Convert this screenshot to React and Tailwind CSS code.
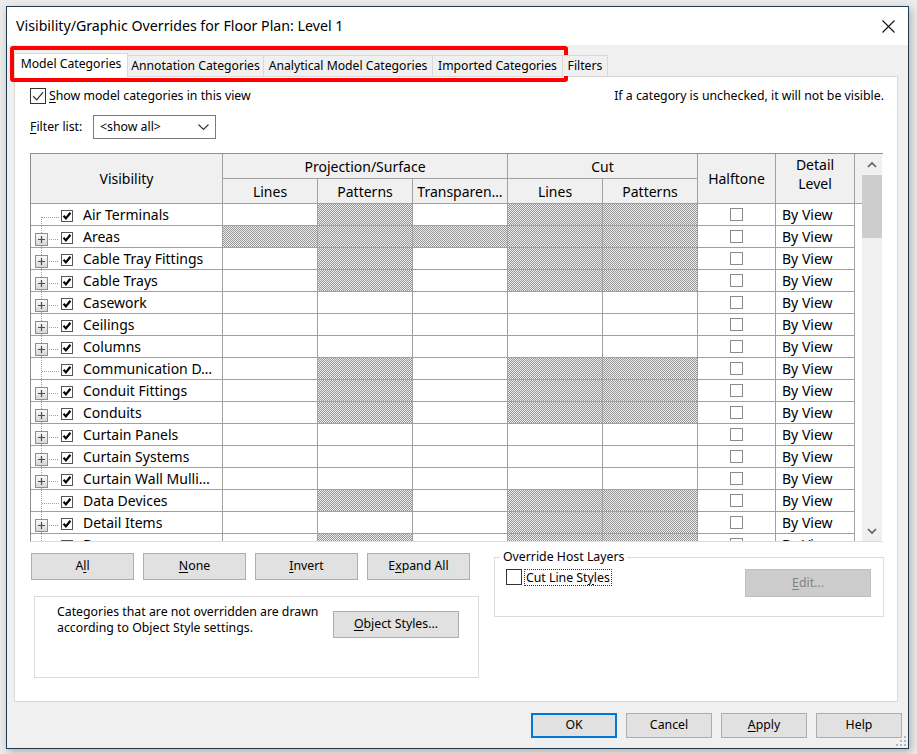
import React from "react";

const HATCH =
  "bg-[repeating-conic-gradient(#979797_0%_25%,#ececec_0%_50%)] bg-[length:2px_2px]";

const rows = [
  { name: "Air Terminals", leaf: true, first: true, hatch: [0, 1, 0, 1, 1] },
  { name: "Areas", hatch: [1, 1, 1, 1, 1] },
  { name: "Cable Tray Fittings", hatch: [0, 1, 0, 1, 1] },
  { name: "Cable Trays", hatch: [0, 1, 0, 1, 1] },
  { name: "Casework", hatch: [0, 0, 0, 0, 0] },
  { name: "Ceilings", hatch: [0, 0, 0, 0, 0] },
  { name: "Columns", hatch: [0, 0, 0, 0, 0] },
  { name: "Communication D…", leaf: true, hatch: [0, 1, 0, 1, 1] },
  { name: "Conduit Fittings", hatch: [0, 1, 0, 1, 1] },
  { name: "Conduits", hatch: [0, 1, 0, 1, 1] },
  { name: "Curtain Panels", hatch: [0, 0, 0, 0, 0] },
  { name: "Curtain Systems", hatch: [0, 0, 0, 0, 0] },
  { name: "Curtain Wall Mulli…", hatch: [0, 0, 0, 0, 0] },
  { name: "Data Devices", leaf: true, hatch: [0, 1, 0, 1, 1] },
  { name: "Detail Items", hatch: [0, 0, 0, 1, 1] },
  { name: "Doors", hatch: [0, 1, 0, 1, 1] },
];

function Tree({ leaf, first }) {
  // dotted tree lines plus the expander box
  return (
    <svg width="30" height="22" className="shrink-0">
      <line x1="10.5" y1={first ? 13 : 0} x2="10.5" y2="22" stroke="#a0a0a0" strokeDasharray="1 1" />
      <line x1={leaf ? 11 : 16} y1="13.5" x2="28" y2="13.5" stroke="#a0a0a0" strokeDasharray="1 1" />
      {!leaf && (
        <g>
          <defs>
            <linearGradient id="pb" x1="0" y1="0" x2="0" y2="1">
              <stop offset="0" stopColor="#fbfbfb" />
              <stop offset="1" stopColor="#d6d6d6" />
            </linearGradient>
          </defs>
          <rect x="4.5" y="7.5" width="12" height="12" fill="url(#pb)" stroke="#8e8e8e" />
          <path d="M7 13.5h7M10.5 10v7" stroke="#2f4f96" strokeWidth="1.2" />
        </g>
      )}
    </svg>
  );
}

function RowCheck() {
  return (
    <svg width="12" height="12" className="shrink-0">
      <rect x="0.5" y="0.5" width="11" height="11" fill="#fff" stroke="#555" />
      <path d="M2.6 5.8 L4.9 8.4 L9.4 2.8" fill="none" stroke="#000" strokeWidth="2.2" />
    </svg>
  );
}

function Box({ size = 13, checked = false, border = "#8a8a8a" }) {
  return (
    <svg width={size} height={size} className="shrink-0">
      <rect x="0.5" y="0.5" width={size - 1} height={size - 1} fill="#fff" stroke={border} />
      {checked && (
        <path
          d={`M${size * 0.2} ${size * 0.52} L${size * 0.42} ${size * 0.74} L${size * 0.82} ${size * 0.26}`}
          fill="none"
          stroke="#333"
          strokeWidth="1.3"
        />
      )}
    </svg>
  );
}

function Btn({ children, className = "" }) {
  return (
    <div
      className={`flex items-center justify-center bg-[#e1e1e1] border border-[#adadad] text-[12.3px] text-black ${className}`}
    >
      {children}
    </div>
  );
}

function Chevron({ up }) {
  return (
    <svg width="10" height="7">
      <path d={up ? "M1 6 L5 2 L9 6" : "M1 1 L5 5 L9 1"} fill="none" stroke="#606060" strokeWidth="1.6" />
    </svg>
  );
}

export default function App() {
  return (
    <div className="w-[917px] h-[754px] bg-[#ebebeb] pt-[6px] pl-[6px] font-['Segoe_UI','Noto_Sans',sans-serif] text-black relative overflow-hidden">
      <div className="w-[903px] h-[743px] border border-[#1d3b53] bg-[#f0f0f0] flex flex-col shadow-[2px_3px_8px_rgba(0,0,0,0.25)] relative">
        {/* Title bar */}
        <div className="h-[38px] bg-white flex items-center justify-between pl-[9px] pr-[13px] shrink-0">
          <span className="text-[14.2px]">Visibility/Graphic Overrides for Floor Plan: Level 1</span>
          <svg width="13" height="13">
            <path d="M0.5 0.5 L12.5 12.5 M12.5 0.5 L0.5 12.5" stroke="#111" strokeWidth="1.1" />
          </svg>
        </div>

        <div className="flex-1 flex flex-col px-[7px] pt-[8px]">
          {/* Tabs */}
          <div className="flex items-end h-[24px] relative z-10 text-[12.2px]">
            <div className="w-[114px] h-[24px] bg-white border border-b-0 border-[#d9d9d9] flex items-center justify-center pb-[2px]">
              Model Categories
            </div>
            <div className="w-[136px] h-[21px] mb-px bg-[#f0f0f0] border border-b-0 border-l-0 border-[#d9d9d9] flex items-center justify-center">
              Annotation Categories
            </div>
            <div className="w-[169px] h-[21px] mb-px bg-[#f0f0f0] border border-b-0 border-l-0 border-[#d9d9d9] flex items-center justify-center">
              Analytical Model Categories
            </div>
            <div className="w-[130px] h-[21px] mb-px bg-[#f0f0f0] border border-b-0 border-l-0 border-[#d9d9d9] flex items-center justify-center">
              Imported Categories
            </div>
            <div className="w-[45px] h-[21px] mb-px bg-[#f0f0f0] border border-b-0 border-l-0 border-[#d9d9d9] flex items-center justify-center">
              Filters
            </div>
          </div>

          {/* Panel */}
          <div className="w-[884px] h-[626px] -mt-px bg-white border border-[#d9d9d9] flex flex-col text-[12.3px]">
            <div className="mt-[11px] h-[16px] flex items-center justify-between pl-[15px] pr-[13px]">
              <div className="flex items-center gap-[3px]">
                <Box size={16} checked border="#333" />
                <span>
                  <span className="underline underline-offset-2">S</span>how model categories in this view
                </span>
              </div>
              <span>If a category is unchecked, it will not be visible.</span>
            </div>

            <div className="mt-[11px] h-[24px] flex items-center pl-[15px]">
              <span className="w-[63px]">
                <span className="underline underline-offset-2">F</span>ilter list:
              </span>
              <div className="w-[123px] h-[24px] border border-[#7a7a7a] flex items-center justify-between pl-[6px] pr-[6px]">
                <span>&lt;show all&gt;</span>
                <svg width="11" height="7">
                  <path d="M0.5 0.5 L5.5 5.5 L10.5 0.5" fill="none" stroke="#333" strokeWidth="1.1" />
                </svg>
              </div>
            </div>

            {/* Table */}
            <div className="mt-[14px] ml-[15px] w-[853px] h-[389px] flex border-t border-l border-[#8f8f8f] border-b border-b-[#dcdcdc] text-[14px]">
              <div className="w-[831px] flex flex-col">
                <div className="grid grid-cols-[192px_95px_95px_95px_95px_95px_78px_79px_7px] grid-rows-[25px_25px] bg-[#f0f0f0]">
                  <div className="row-span-2 border-r border-b border-[#a0a0a0] flex items-center justify-center">Visibility</div>
                  <div className="col-span-3 border-r border-b border-[#a0a0a0] flex items-center justify-center">Projection/Surface</div>
                  <div className="col-span-2 border-r border-b border-[#a0a0a0] flex items-center justify-center">Cut</div>
                  <div className="row-span-2 border-r border-b border-[#a0a0a0] flex items-center justify-center">Halftone</div>
                  <div className="row-span-2 border-r border-b border-[#a0a0a0] flex flex-col items-center justify-center leading-[19px] pb-[9px]">
                    <span>Detail</span>
                    <span>Level</span>
                  </div>
                  <div className="row-span-2 border-b border-[#a0a0a0]"></div>
                  <div className="border-r border-b border-[#a0a0a0] flex items-center justify-center">Lines</div>
                  <div className="border-r border-b border-[#a0a0a0] flex items-center justify-center">Patterns</div>
                  <div className="border-r border-b border-[#a0a0a0] flex items-center justify-center">Transparen…</div>
                  <div className="border-r border-b border-[#a0a0a0] flex items-center justify-center">Lines</div>
                  <div className="border-r border-b border-[#a0a0a0] flex items-center justify-center">Patterns</div>
                </div>

                <div className="flex-1 overflow-hidden">
                  {rows.map((r) => (
                    <div key={r.name} className="flex h-[22px] w-[824px]">
                      <div className="w-[192px] border-r border-b border-[#a0a0a0] flex items-start">
                        <Tree leaf={r.leaf} first={r.first} />
                        <div className="mt-[6px]">
                          <RowCheck />
                        </div>
                        <span className="ml-[10px] leading-[22px] whitespace-nowrap">{r.name}</span>
                      </div>
                      {r.hatch.map((h, i) => (
                        <div key={i} className={`w-[95px] border-r border-b border-[#a0a0a0] ${h ? HATCH : "bg-white"}`}></div>
                      ))}
                      <div className="w-[78px] border-r border-b border-[#a0a0a0] flex justify-center pt-[4px]">
                        <Box size={13} />
                      </div>
                      <div className="w-[79px] border-r border-b border-[#a0a0a0] pl-[6px] leading-[22px] whitespace-nowrap">
                        By View
                      </div>
                    </div>
                  ))}
                </div>
              </div>

              {/* Scrollbar */}
              <div className="w-[20px] bg-[#f0f0f0] flex flex-col items-center">
                <div className="h-[21px] flex items-center justify-center">
                  <Chevron up />
                </div>
                <div className="w-[20px] h-[63px] bg-[#cdcdcd]"></div>
                <div className="flex-1"></div>
                <div className="h-[20px] flex items-center justify-center">
                  <Chevron />
                </div>
              </div>
            </div>

            {/* Lower area */}
            <div className="flex items-start">
              <div className="ml-[16px] w-[448px] flex flex-col">
                <div className="mt-[11px] flex gap-[9px]">
                  <Btn className="w-[103px] h-[27px]">
                    <span>
                      A<span className="underline underline-offset-2">l</span>l
                    </span>
                  </Btn>
                  <Btn className="w-[103px] h-[27px]">
                    <span>
                      <span className="underline underline-offset-2">N</span>one
                    </span>
                  </Btn>
                  <Btn className="w-[103px] h-[27px]">
                    <span>
                      <span className="underline underline-offset-2">I</span>nvert
                    </span>
                  </Btn>
                  <Btn className="w-[103px] h-[27px]">
                    <span>
                      E<span className="underline underline-offset-2">x</span>pand All
                    </span>
                  </Btn>
                </div>
                <div className="mt-[16px] ml-[3px] w-[445px] h-[82px] border border-[#dcdcdc] flex items-start">
                  <p className="ml-[22px] mt-[7px] w-[272px] leading-[16px]">
                    Categories that are not overridden are drawn according to Object Style settings.
                  </p>
                  <Btn className="ml-auto mr-[19px] mt-[14px] w-[126px] h-[27px]">
                    <span>
                      <span className="underline underline-offset-2">O</span>bject Styles...
                    </span>
                  </Btn>
                </div>
              </div>

              <fieldset className="ml-[15px] mt-[7px] w-[390px] h-[68px] border border-[#dcdcdc] pl-[11px] pr-[12px]">
                <legend className="-ml-[6px] px-[3px] leading-[16px]">Override Host Layers</legend>
                <div className="flex items-start justify-between">
                  <div className="flex items-center mt-[4px]">
                    <Box size={16} border="#333" />
                    <span className="ml-[3px] px-px leading-[15px] outline-1 outline-dotted outline-[#333]">
                      Cut Line St<span className="underline underline-offset-2">y</span>les
                    </span>
                  </div>
                  <div className="mt-[4px] w-[126px] h-[28px] bg-[#cccccc] border border-[#bfbfbf] flex items-center justify-center text-[#838383]">
                    <span>
                      <span className="underline underline-offset-2">E</span>dit...
                    </span>
                  </div>
                </div>
              </fieldset>
            </div>
          </div>

          {/* Dialog buttons */}
          <div className="mt-[11px] flex justify-end gap-[9px] -mr-px">
            <div className="w-[86px] h-[25px] bg-[#e1e1e1] border-2 border-[#0078d7] flex items-center justify-center text-[12.3px]">
              OK
            </div>
            <Btn className="w-[86px] h-[25px]">Cancel</Btn>
            <Btn className="w-[86px] h-[25px]">
              <span>
                <span className="underline underline-offset-2">A</span>pply
              </span>
            </Btn>
            <Btn className="w-[86px] h-[25px]">Help</Btn>
          </div>
        </div>

        {/* resize grip */}
        <svg width="12" height="12" className="absolute right-[1px] bottom-[1px]">
          {[[9, 1], [9, 5], [5, 5], [9, 9], [5, 9], [1, 9]].map(([x, y], i) => (
            <rect key={i} x={x} y={y} width="2" height="2" fill="#b8b8b8" />
          ))}
        </svg>
      </div>

      {/* red annotation frame */}
      <div className="absolute left-[10px] top-[46px] w-[558px] h-[36px] border-[4px] border-[#ff0000] rounded-[3px] pointer-events-none"></div>
    </div>
  );
}
